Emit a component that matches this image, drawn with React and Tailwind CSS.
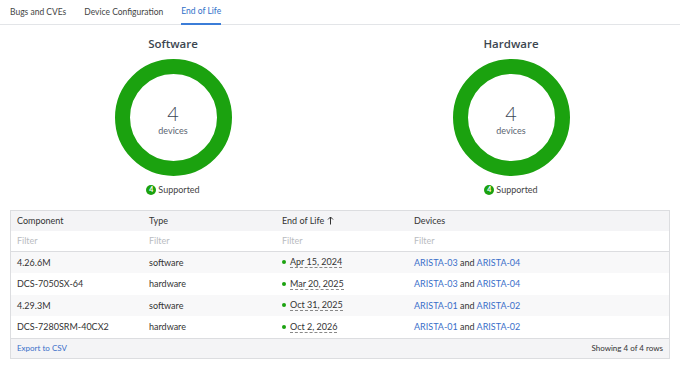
import React from 'react';

const rows = [
    { component: '4.26.6M', type: 'software', eol: 'Apr 15, 2024', devices: ['ARISTA-03', 'ARISTA-04'] },
    { component: 'DCS-7050SX-64', type: 'hardware', eol: 'Mar 20, 2025', devices: ['ARISTA-03', 'ARISTA-04'] },
    { component: '4.29.3M', type: 'software', eol: 'Oct 31, 2025', devices: ['ARISTA-01', 'ARISTA-02'] },
    { component: 'DCS-7280SRM-40CX2', type: 'hardware', eol: 'Oct 2, 2026', devices: ['ARISTA-01', 'ARISTA-02'] },
];

const Donut = ({ title, count }) => (
    <div className="flex flex-col items-center">
        <p className="h-[16px] font-['Open_Sans',sans-serif] text-[11.5px] leading-[16px] font-semibold text-[#3c4650]">{title}</p>
        <div className="relative mt-[7px] h-[117px] w-[117px]">
            <svg width="117" height="117" viewBox="0 0 117 117" className="absolute inset-0">
                <circle cx="58.5" cy="58.5" r="51" fill="none" stroke="#1ba20f" strokeWidth="15" />
            </svg>
            <div className="absolute inset-0 flex flex-col items-center justify-center pt-[4px]">
                <span className="h-[19px] text-[20px] leading-[19px] font-light text-[#3b4756]">{count}</span>
                <span className="mt-[2px] text-[9px] leading-[11px] text-[#5b6470]">devices</span>
            </div>
        </div>
        <div className="mt-[7px] flex items-center gap-[2px]">
            <span className="flex h-[10px] w-[10px] items-center justify-center rounded-full bg-[#1ba20f] text-[7px] leading-none font-bold text-white">
                {count}
            </span>
            <span className="text-[9px] text-[#444]">Supported</span>
        </div>
    </div>
);

const cols = 'grid grid-cols-[132px_133px_132px_1fr]';

const App = () => {
    return (
        <div className="h-[365px] w-[680px] bg-white text-[9px] text-[#333]" style={{ fontFamily: 'Lato, "Open Sans", sans-serif' }}>
            <div className="flex h-[25px] items-stretch gap-[18px] border-b border-[#e3e5e8] pl-[10px] text-[8.5px]">
                <div className="flex items-center text-[#444]">Bugs and CVEs</div>
                <div className="flex items-center text-[#444]">Device Configuration</div>
                <div className="-mb-px flex items-center border-b-2 border-[#3b7dd8] text-[#2f6fc8]">End of Life</div>
            </div>

            <div className="grid grid-cols-2 pt-[11px] pl-[4px]">
                <Donut title="Software" count={4} />
                <Donut title="Hardware" count={4} />
            </div>

            <div className="mx-[10px] mt-[13px] border border-[#dcdde0]">
                <div className={`${cols} h-[20px] items-center bg-[#f4f4f6] px-[6px]`}>
                    <span>Component</span>
                    <span>Type</span>
                    <span className="flex items-center gap-[2px]">
                        End of Life
                        <svg width="7" height="9" viewBox="0 0 7 9" className="ml-[1px]">
                            <path d="M3.5 8.5V1M1 3.5L3.5 1L6 3.5" fill="none" stroke="#333" strokeWidth="1" />
                        </svg>
                    </span>
                    <span>Devices</span>
                </div>
                <div className={`${cols} h-[21px] items-center border-b border-[#dcdde0] px-[6px] text-[#b9bcc1]`}>
                    <span>Filter</span>
                    <span>Filter</span>
                    <span>Filter</span>
                    <span>Filter</span>
                </div>
                {rows.map((row, i) => (
                    <div
                        key={row.component}
                        className={`${cols} h-[21.5px] items-center px-[6px] ${i % 2 === 0 ? 'bg-[#f8f8f9]' : 'bg-white'}`}
                    >
                        <span>{row.component}</span>
                        <span>{row.type}</span>
                        <span className="flex items-center gap-[4px]">
                            <span className="h-[4px] w-[4px] rounded-full bg-[#1ba20f]" />
                            <span className="border-b border-dashed border-[#888] leading-[11px]">{row.eol}</span>
                        </span>
                        <span>
                            <span className="text-[#3a6fc9]">{row.devices[0]}</span> and{' '}
                            <span className="text-[#3a6fc9]">{row.devices[1]}</span>
                        </span>
                    </div>
                ))}
                <div className="flex h-[20px] items-center justify-between border-t border-[#dcdde0] bg-[#f4f4f6] px-[6px] text-[8px]">
                    <span className="text-[#3a6fc9]">Export to CSV</span>
                    <span className="text-[#333]">Showing 4 of 4 rows</span>
                </div>
            </div>
        </div>
    );
};

export default App;
